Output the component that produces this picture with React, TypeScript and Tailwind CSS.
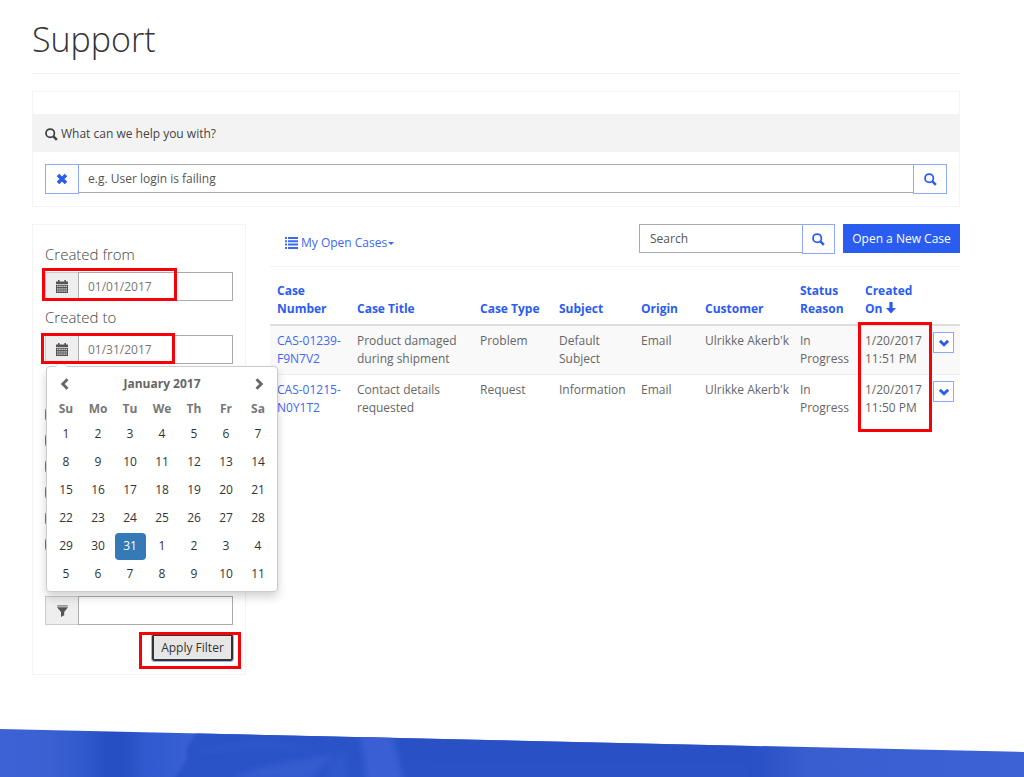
import { FormEvent, ReactNode, useState } from 'react';

type Case = {
  number: string;
  title: string;
  type: string;
  subject: string;
  origin: string;
  customer: string;
  status: string;
  created: string;
};

const cases: Case[] = [
  {
    number: 'CAS-01239-F9N7V2',
    title: 'Product damaged during shipment',
    type: 'Problem',
    subject: 'Default Subject',
    origin: 'Email',
    customer: "Ulrikke Akerb'k",
    status: 'In Progress',
    created: '1/20/2017 11:51 PM',
  },
  {
    number: 'CAS-01215-N0Y1T2',
    title: 'Contact details requested',
    type: 'Request',
    subject: 'Information',
    origin: 'Email',
    customer: "Ulrikke Akerb'k",
    status: 'In Progress',
    created: '1/20/2017 11:50 PM',
  },
];

const weekDays = ['Su', 'Mo', 'Tu', 'We', 'Th', 'Fr', 'Sa'];

const weeks = [
  [1, 2, 3, 4, 5, 6, 7],
  [8, 9, 10, 11, 12, 13, 14],
  [15, 16, 17, 18, 19, 20, 21],
  [22, 23, 24, 25, 26, 27, 28],
  [29, 30, 31, 1, 2, 3, 4],
  [5, 6, 7, 8, 9, 10, 11],
];

function SearchIcon() {
  return (
    <svg viewBox="0 0 14 14" className="size-[13px] shrink-0" fill="none" stroke="currentColor" aria-hidden="true">
      <circle cx="5.6" cy="5.6" r="4.5" strokeWidth="1.9" />
      <path d="M9 9l3.8 3.8" strokeWidth="2.6" />
    </svg>
  );
}

function RemoveIcon() {
  return (
    <svg viewBox="0 0 12 12" className="size-3" fill="none" stroke="currentColor" strokeWidth="3.6" aria-hidden="true">
      <path d="M2 2l8 8M10 2l-8 8" />
    </svg>
  );
}

function CalendarIcon() {
  return (
    <svg viewBox="0 0 12 13" className="h-[13px] w-3" fill="currentColor" aria-hidden="true">
      <path d="M0 1.4h2V0h1.6v1.4h4.8V0H10v1.4h2V4H0z" />
      <path
        fillRule="evenodd"
        d="M0 4.7h12V13H0zM1.2 5.8v1.2h1.2V5.8zm2.1 0v1.2h1.2V5.8zm2.1 0v1.2h1.2V5.8zm2.1 0v1.2h1.2V5.8zm2.1 0v1.2h1.2V5.8zM1.2 8.2v1.2h1.2V8.2zm2.1 0v1.2h1.2V8.2zm2.1 0v1.2h1.2V8.2zm2.1 0v1.2h1.2V8.2zm2.1 0v1.2h1.2V8.2zM1.2 10.6v1.2h1.2v-1.2zm2.1 0v1.2h1.2v-1.2zm2.1 0v1.2h1.2v-1.2zm2.1 0v1.2h1.2v-1.2zm2.1 0v1.2h1.2v-1.2z"
      />
    </svg>
  );
}

function FilterIcon() {
  return (
    <svg viewBox="0 0 11 12" className="h-3 w-[11px]" fill="currentColor" aria-hidden="true">
      <path d="M0 2.2h11L7.2 7v3.2L4 12V7z" />
      <path d="M.4 0h10.2l.4 1.7H0z" opacity=".55" />
    </svg>
  );
}

function ListIcon() {
  return (
    <svg viewBox="0 0 13 12" className="h-3 w-[13px]" fill="currentColor" aria-hidden="true">
      <path d="M0 0h2v2H0zM3 0h10v2H3zM0 3.3h2v2H0zM3 3.3h10v2H3zM0 6.6h2v2H0zM3 6.6h10v2H3zM0 9.9h2v2H0zM3 9.9h10v2H3z" />
    </svg>
  );
}

function ArrowDownIcon() {
  return (
    <svg viewBox="0 0 10 12" className="ml-1 inline-block h-3 w-[10px] align-[-1px]" fill="currentColor" aria-hidden="true">
      <path d="M3.4 0h3.2v6H10l-5 5.6L0 6h3.4z" />
    </svg>
  );
}

function Chevron({ d }: { d: string }) {
  return (
    <svg viewBox="0 0 12 12" className="size-3" fill="none" stroke="currentColor" strokeWidth="2.8" aria-hidden="true">
      <path d={d} />
    </svg>
  );
}

function InputGroup({ id, label, icon, value, onChange }: {
  id: string;
  label: string;
  icon: ReactNode;
  value: string;
  onChange: (v: string) => void;
}) {
  return (
    <div className="flex h-[29px]">
      <span className="flex w-[33px] shrink-0 items-center justify-center border border-r-0 border-[#ccc] bg-[#eee] text-[#555]">
        {icon}
      </span>
      <input
        id={id}
        aria-label={label}
        className="w-full min-w-0 border border-[#aaa] bg-white px-[9px] text-[#777]"
        value={value}
        onChange={(e) => onChange(e.target.value)}
      />
    </div>
  );
}

function DatePicker({ selected, onSelect }: { selected: string; onSelect: (v: string) => void }) {
  return (
    <div className="absolute top-[31px] left-px z-10 w-[232px] rounded-sm border border-[#ccc] bg-white p-[3px] text-[#333] shadow-[0_5px_10px_rgba(0,0,0,0.18)]">
      <svg viewBox="0 0 12 6" className="absolute -top-[6px] left-2 h-[6px] w-3" aria-hidden="true">
        <path d="M0 6l6-6 6 6z" fill="#fff" />
        <path d="M0 6l6-6 6 6" fill="none" stroke="#ddd" />
      </svg>
      <div className="flex h-[27px] items-center justify-between px-[5px] font-bold text-[#666]">
        <button type="button" aria-label="Previous month" className="p-1">
          <Chevron d="M8.5 1.2L3.7 6l4.8 4.8" />
        </button>
        <span>January 2017</span>
        <button type="button" aria-label="Next month" className="p-1">
          <Chevron d="M3.5 1.2L8.3 6l-4.8 4.8" />
        </button>
      </div>
      <table className="w-full table-fixed border-collapse text-center">
        <thead>
          <tr className="h-[23px] text-[#777]">
            {weekDays.map((d) => (
              <th key={d} className="p-0 font-bold">{d}</th>
            ))}
          </tr>
        </thead>
        <tbody>
          {weeks.map((week, row) => (
            <tr key={row} className="h-7">
              {week.map((day) => {
                const month = row > 3 && day < 20 ? '02' : '01';
                const date = `${month}/${String(day).padStart(2, '0')}/2017`;
                return (
                  <td key={day} className="p-0">
                    <button
                      type="button"
                      className={`h-[27px] w-[31px] rounded-sm ${date === selected ? 'bg-[#337ab7] text-white' : ''}`}
                      onClick={() => onSelect(date)}
                    >
                      {day}
                    </button>
                  </td>
                );
              })}
            </tr>
          ))}
        </tbody>
      </table>
    </div>
  );
}

function Highlight({ className }: { className: string }) {
  return <div className={`pointer-events-none absolute border-3 border-[#f90009] ${className}`} />;
}

function Filters() {
  const [from, setFrom] = useState('01/01/2017');
  const [to, setTo] = useState('01/31/2017');
  const [text, setText] = useState('');

  const handleSubmit = (e: FormEvent) => e.preventDefault();

  return (
    <form onSubmit={handleSubmit} className="w-[214px] shrink-0 border border-[#f3f3f3] px-3 pt-[17px] pb-[13px]">
      <label htmlFor="created-from" className="block h-[30px] text-[15px] leading-6 font-light text-[#444]">
        Created from
      </label>
      <div className="relative">
        <InputGroup id="created-from" label="Created from" icon={<CalendarIcon />} value={from} onChange={setFrom} />
        <Highlight className="-top-1 -left-[3px] h-[33px] w-[135px]" />
      </div>
      <label htmlFor="created-to" className="mt-1 block h-[30px] text-[15px] leading-6 font-light text-[#444]">
        Created to
      </label>
      <div className="relative">
        <InputGroup id="created-to" label="Created to" icon={<CalendarIcon />} value={to} onChange={setTo} />
        <DatePicker selected={to} onSelect={setTo} />
        <Highlight className="-top-[2px] -left-1 z-20 h-[31px] w-[134px]" />
      </div>
      <div className="mt-[44px] mb-[45px] flex flex-col gap-[13px]">
        {[1, 2, 3, 4, 5, 6].map((n) => (
          <input key={n} type="checkbox" aria-label={`Option ${n}`} className="size-[13px]" />
        ))}
      </div>
      <InputGroup id="filter-text" label="Filter text" icon={<FilterIcon />} value={text} onChange={setText} />
      <div className="mt-[9px] flex justify-end">
        <div className="relative">
          <button type="submit" className="h-[27px] w-[81px] rounded-xs border-2 border-[#333] bg-[#e6e6e6] text-[#333] outline-1 outline-[#9fb0ee] outline-solid">
            Apply Filter
          </button>
          <Highlight className="-top-[2px] -right-2 h-[37px] w-[102px]" />
        </div>
      </div>
    </form>
  );
}

function CaseTable() {
  return (
    <table className="w-full table-fixed border-collapse text-left leading-[18px]">
      <colgroup>
        <col className="w-[80px]" />
        <col className="w-[123px]" />
        <col className="w-[79px]" />
        <col className="w-[82px]" />
        <col className="w-[64px]" />
        <col className="w-[95px]" />
        <col className="w-[65px]" />
        <col className="w-[68px]" />
        <col className="w-[34px]" />
      </colgroup>
      <thead>
        <tr className="border-b-2 border-[#ddd] align-bottom text-[#2b5cf0]">
          {['Case Number', 'Case Title', 'Case Type', 'Subject', 'Origin', 'Customer', 'Status Reason'].map((h) => (
            <th key={h} className="px-[7px] py-[6px] font-bold">
              <a href="#">{h}</a>
            </th>
          ))}
          <th className="px-[7px] py-[6px] font-bold">
            <a href="#">
              Created On
              <ArrowDownIcon />
            </a>
          </th>
          <td />
        </tr>
      </thead>
      <tbody className="text-[#666]">
        {cases.map((c) => (
          <tr key={c.number} className="align-top not-last:border-b not-last:border-[#eee] odd:bg-[#f9f9f9]">
            <td className="px-[7px] py-[6px]">
              <a href="#" className="text-[#3d68f2]">{c.number}</a>
            </td>
            <td className="px-[7px] py-[6px]">{c.title}</td>
            <td className="px-[7px] py-[6px]">{c.type}</td>
            <td className="px-[7px] py-[6px]">{c.subject}</td>
            <td className="px-[7px] py-[6px]">{c.origin}</td>
            <td className="py-[6px] pl-[7px] whitespace-nowrap">{c.customer}</td>
            <td className="px-[7px] py-[6px]">{c.status}</td>
            <td className="py-[6px] pl-[7px]">{c.created}</td>
            <td className="px-[7px] py-[6px]">
              <button
                type="button"
                aria-label={`Actions for ${c.number}`}
                className="flex size-[21px] items-center justify-center border border-[#8ea8f8] bg-white text-[#2b5cf0]"
              >
                <svg viewBox="0 0 12 12" className="size-[10px]" fill="none" stroke="currentColor" strokeWidth="3.4" aria-hidden="true">
                  <path d="M1 3.4l5 4.8 5-4.8" />
                </svg>
              </button>
            </td>
          </tr>
        ))}
      </tbody>
    </table>
  );
}

export default function App() {
  const [question, setQuestion] = useState('');
  const [search, setSearch] = useState('');

  return (
    <div className="overflow-hidden bg-white font-['Open_Sans','Noto_Sans',sans-serif] text-xs text-[#444]">
      <main className="mr-16 ml-8 pt-4">
        <h1 className="border-b border-[#eee] pb-[10px] text-[34px] leading-[47px] font-light text-[#333]">Support</h1>

        <section className="mt-[17px] border border-[#f3f3f3] pt-[22px]">
          <label htmlFor="question" className="flex h-[38px] items-center gap-[3px] bg-[#f3f3f3] px-3 pt-[2px]">
            <SearchIcon />
            What can we help you with?
          </label>
          <div className="flex items-start p-3">
            <button
              type="button"
              aria-label="Clear"
              className="flex h-[30px] w-[34px] shrink-0 items-center justify-center border border-[#8ea8f8] text-[#2b5cf0]"
              onClick={() => setQuestion('')}
            >
              <RemoveIcon />
            </button>
            <input
              id="question"
              className="h-[29px] w-full min-w-0 border-y border-[#aaa] px-[9px] placeholder:text-[#555]"
              placeholder="e.g. User login is failing"
              value={question}
              onChange={(e) => setQuestion(e.target.value)}
            />
            <button
              type="button"
              aria-label="Search articles"
              className="flex h-[30px] w-[34px] shrink-0 items-center justify-center border border-[#8ea8f8] text-[#2b5cf0]"
            >
              <SearchIcon />
            </button>
          </div>
        </section>

        <div className="mt-[17px] flex items-start gap-6">
          <Filters />

          <section className="min-w-0 flex-1">
            <div className="flex h-[43px] items-start border-b border-[#f3f3f3]">
              <button type="button" className="mt-[9px] ml-[15px] flex items-center gap-[3px] text-[#3d68f2]">
                <ListIcon />
                <span className="flex items-center gap-px pt-px leading-[18px]">
                  My Open Cases
                  <svg viewBox="0 0 6 3" className="h-[3px] w-[6px]" fill="currentColor" aria-hidden="true">
                    <path d="M0 0h6L3 3z" />
                  </svg>
                </span>
              </button>
              <div className="ml-auto flex items-start">
                <input
                  aria-label="Search"
                  className="h-[29px] w-[163px] border border-r-0 border-[#aaa] px-[10px] placeholder:text-[#555]"
                  placeholder="Search"
                  value={search}
                  onChange={(e) => setSearch(e.target.value)}
                />
                <button
                  type="button"
                  aria-label="Search cases"
                  className="flex h-[30px] w-[33px] items-center justify-center border border-[#8ea8f8] text-[#2b5cf0]"
                >
                  <SearchIcon />
                </button>
                <a href="#" className="ml-2 flex h-[29px] w-[117px] items-center justify-center bg-[#2b5cf0] whitespace-nowrap text-white">
                  Open a New Case
                </a>
              </div>
            </div>
            <div className="relative mt-[9px]">
              <CaseTable />
              <Highlight className="top-[46px] right-[28px] h-[110px] w-[74px]" />
            </div>
          </section>
        </div>
      </main>

      <footer className="mt-[53px]">
        <svg viewBox="0 0 1024 49" preserveAspectRatio="none" className="block h-[49px] w-full" aria-hidden="true">
          <defs>
            <linearGradient id="band">
              <stop offset="0" stopColor="#3c62d6" />
              <stop offset="0.05" stopColor="#3a60d2" />
              <stop offset="0.08" stopColor="#305acd" />
              <stop offset="0.105" stopColor="#264fc4" />
              <stop offset="0.12" stopColor="#264fc4" />
              <stop offset="0.14" stopColor="#3059cf" />
              <stop offset="0.18" stopColor="#385fd4" />
              <stop offset="0.3" stopColor="#2d54c9" />
              <stop offset="0.7" stopColor="#2a51c5" />
              <stop offset="0.74" stopColor="#2a51c5" />
              <stop offset="0.79" stopColor="#385ed0" />
              <stop offset="1" stopColor="#3c62d6" />
            </linearGradient>
            <filter id="soft">
              <feGaussianBlur stdDeviation="3" />
            </filter>
            <filter id="edge">
              <feGaussianBlur stdDeviation="1" />
            </filter>
            <clipPath id="slope">
              <path d="M0 1L1024 24V49H0z" />
            </clipPath>
          </defs>
          <g clipPath="url(#slope)">
            <path d="M0 0h1024v49H0z" fill="url(#band)" />
            <path d="M202 -4L186 22l1 9-16 24h236l-8-59z" fill="#2b53c8" filter="url(#edge)" />
            <g filter="url(#soft)" fill="#3c62d6">
              <path d="M230 52c24-14 60-18 106-26-10 8-20 16-24 26z" opacity=".6" />
              <path d="M190 26c30-10 80-16 130-4-50-3-90-2-130 4z" opacity=".35" />
              <path d="M358 0l32 0 14 54h-38c-1-20-4-36-8-54z" opacity=".85" />
              <path d="M328 40l16-20 4 34h-22z" opacity=".3" />
            </g>
            <path d="M394 0c4 16 8 34 16 54h340V0z" fill="#2a51c5" filter="url(#edge)" opacity=".8" />
          </g>
        </svg>
      </footer>
    </div>
  );
}
